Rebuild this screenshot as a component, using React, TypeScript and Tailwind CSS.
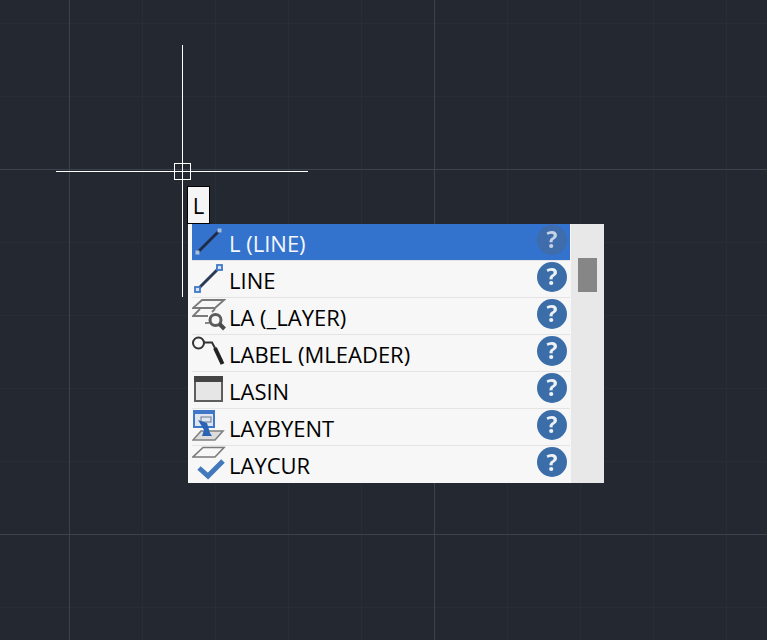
import type { ReactNode } from 'react';

const MINOR_X = [142, 215, 288, 361, 507, 580, 653, 726];
const MINOR_Y = [23, 96, 242, 315, 388, 461, 607];
const MAJOR_X = [69, 434];
const MAJOR_Y = [169, 534];

function GridLines() {
  return (
    <svg className="absolute inset-0" width={767} height={640} shapeRendering="crispEdges">
      {MINOR_X.map((x) => <rect key={x} x={x} y={0} width={1} height={640} fill="#292d36" />)}
      {MINOR_Y.map((y) => <rect key={y} x={0} y={y} width={767} height={1} fill="#292d36" />)}
      {MAJOR_X.map((x) => <rect key={x} x={x} y={0} width={1} height={640} fill="#3d424f" />)}
      {MAJOR_Y.map((y) => <rect key={y} x={0} y={y} width={767} height={1} fill="#3d424f" />)}
    </svg>
  );
}

function Crosshair() {
  return (
    <svg className="absolute left-[50px] top-[40px]" width={264} height={260} shapeRendering="crispEdges">
      <rect x={132} y={5} width={1} height={252} fill="#fff" />
      <rect x={6} y={131} width={252} height={1} fill="#fff" />
      <rect x={124.5} y={123.5} width={16} height={16} fill="none" stroke="#fff" />
    </svg>
  );
}

function LineIcon({ active }: { active: boolean }) {
  const end = active ? '#a9bfe0' : '#3f78c8';
  return (
    <svg width={34} height={34} viewBox="0 0 34 34">
      <path d="M5.5 28.5 L27.5 6.5" stroke={active ? '#1f2c47' : '#2a3a57'} strokeWidth={3} />
      {active ? (
        <>
          <rect x={3.5} y={26.5} width={4} height={4} fill={end} />
          <rect x={25.5} y={4.5} width={4} height={4} fill={end} />
        </>
      ) : (
        <>
          <rect x={3} y={26} width={5} height={5} fill="#d7e3f5" stroke={end} strokeWidth={1.8} />
          <rect x={25} y={4} width={5} height={5} fill="#d7e3f5" stroke={end} strokeWidth={1.8} />
        </>
      )}
    </svg>
  );
}

function LayerIcon() {
  return (
    <svg width={34} height={34} viewBox="0 0 34 34">
      <path d="M10 2 H32 L23 10 H1 Z" fill="none" stroke="#7a7a7a" strokeWidth={1.8} />
      <path d="M8 11 L1 18 H16" fill="none" stroke="#7a7a7a" strokeWidth={1.8} />
      <path d="M23 11 L20 14" fill="none" stroke="#7a7a7a" strokeWidth={1.8} />
      <circle cx={23.5} cy={22} r={5.5} fill="none" stroke="#5c5c5c" strokeWidth={3} />
      <path d="M27.5 26 L32.5 31" stroke="#4a4a4a" strokeWidth={4} />
      <path d="M13 25 H17" stroke="#7a7a7a" strokeWidth={1.8} />
    </svg>
  );
}

function LeaderIcon() {
  return (
    <svg width={34} height={34} viewBox="0 0 34 34">
      <circle cx={6.5} cy={8} r={5.5} fill="none" stroke="#333" strokeWidth={2} />
      <path d="M12 7.5 H20 L30 26" fill="none" stroke="#333" strokeWidth={2} />
      <path d="M23 13 L30.5 29" stroke="#222" strokeWidth={4} />
    </svg>
  );
}

function WindowIcon() {
  return (
    <svg width={34} height={34} viewBox="0 0 34 34" shapeRendering="crispEdges">
      <rect x={3} y={5} width={27} height={24} fill="#e6e6e6" stroke="#5e5e5e" strokeWidth={2} />
      <rect x={2} y={4} width={29} height={6} fill="#444" />
    </svg>
  );
}

function LayByEntIcon() {
  return (
    <svg width={34} height={34} viewBox="0 0 34 34">
      <rect x={1} y={1} width={22} height={18} fill="#3f78c8" />
      <rect x={3} y={5} width={18} height={12} fill="#dfe6ef" />
      <rect x={9} y={8} width={10} height={5} fill="none" stroke="#6b7a8c" />
      <path d="M9 22 H31 L23 31 H1 Z" fill="#dcdcdc" stroke="#808080" strokeWidth={1.6} />
      <path d="M6 11 L15 14 L18 24 L20 27 H10 L12 21 Z" fill="#2a64b4" />
    </svg>
  );
}

function LayCurIcon() {
  return (
    <svg width={34} height={34} viewBox="0 0 34 34">
      <path d="M11 1.5 H32 L23 11 H1 Z" fill="none" stroke="#7a7a7a" strokeWidth={1.6} />
      <path d="M7 22 L16 30 L31 15" fill="none" stroke="#4179bb" strokeWidth={5} />
    </svg>
  );
}

function HelpBadge({ active }: { active: boolean }) {
  return (
    <span
      className={`flex h-[30px] w-[30px] shrink-0 items-center justify-center rounded-full text-[23px] leading-none font-bold blur-[0.6px] ${
        active ? 'bg-[#3f6cab] text-[#c5d2e6]' : 'bg-[#3b6ea9] text-[#eef1f6]'
      }`}
    >
      ?
    </span>
  );
}

const ROWS: { label: string; icon: (active: boolean) => ReactNode }[] = [
  { label: 'L (LINE)', icon: (a) => <LineIcon active={a} /> },
  { label: 'LINE', icon: (a) => <LineIcon active={a} /> },
  { label: 'LA (_LAYER)', icon: () => <LayerIcon /> },
  { label: 'LABEL (MLEADER)', icon: () => <LeaderIcon /> },
  { label: 'LASIN', icon: () => <WindowIcon /> },
  { label: 'LAYBYENT', icon: () => <LayByEntIcon /> },
  { label: 'LAYCUR', icon: () => <LayCurIcon /> },
];

function SuggestRow({ label, icon, active }: { label: string; icon: ReactNode; active: boolean }) {
  return (
    <div className={`flex h-[37px] items-center border-b border-[#e4e4e4] last:border-b-0 ${active ? 'bg-[#3373cd] text-[#f4f7fc]' : 'text-black'}`}>
      <span className="flex w-[34px] shrink-0 items-center justify-start pb-[3px] blur-[0.3px]">{icon}</span>
      <span className="ml-[3px] flex-1 pt-[1px] text-[22px] leading-none whitespace-nowrap">{label}</span>
      <span className="mr-[3px] pb-[5px]"><HelpBadge active={active} /></span>
    </div>
  );
}

export default function App() {
  return (
    <div className="relative h-[640px] w-[767px] overflow-hidden bg-[#242830] font-['Open_Sans',sans-serif]">
      <GridLines />
      <Crosshair />
      <div className="absolute left-[187px] top-[186px] flex h-[38px] w-[23px] items-center justify-center border border-black bg-[#f5f5f5] text-[22px] leading-none text-black">
        L
      </div>
      <div className="absolute left-[188px] top-[224px] flex h-[259px] w-[416px] bg-[#f7f7f7]">
        <div className="w-[383px] pl-[4px] pr-[1px]">
          {ROWS.map((row, i) => (
            <SuggestRow key={row.label} label={row.label} icon={row.icon(i === 0)} active={i === 0} />
          ))}
        </div>
        <div className="flex-1 bg-[#e8e8e8] pl-[7px] pt-[34px]">
          <div className="h-[34px] w-[19px] bg-[#868686]" />
        </div>
      </div>
    </div>
  );
}
